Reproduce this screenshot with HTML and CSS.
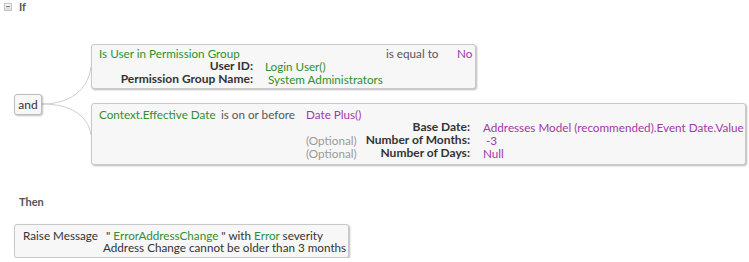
FILE: index.html
```html
<!DOCTYPE html>
<html>
	<head>
		<meta charset="UTF-8">
		<title>Rule</title>
		<link rel="stylesheet" href="styles.css">
	</head>
	<body>
		<div class="rule">
			<div class="sec-head">
				<span class="toggle"></span>
				<span class="head">If</span>
			</div>

			<div class="tree">
				<svg class="links" width="100" height="130" viewBox="0 0 100 130">
					<path d="M42 60 C 70 60, 88 46, 91 23" />
					<path d="M42 60 C 70 60, 88 71, 91 91" />
				</svg>
				<div class="node">and</div>
				<div class="conds">
					<div class="box cond1">
						<div class="c1-top">
							<span class="g">Is User in Permission Group</span>
							<span class="op">is equal to</span>
							<span class="p">No</span>
						</div>
						<div class="c1-params">
							<span class="lbl">User ID:</span>
							<span class="g">Login User()</span>
							<span class="lbl">Permission Group Name:</span>
							<span class="g lead">System Administrators</span>
						</div>
					</div>
					<div class="box cond2">
						<div class="c2-top">
							<span class="g">Context.Effective Date</span>
							<span class="op">is on or before</span>
							<span class="p">Date Plus()</span>
						</div>
						<div class="c2-params">
							<span class="lbl"><span></span>Base Date:</span>
							<span class="p">Addresses Model (recommended).Event Date.Value</span>
							<span class="lbl"><span class="opt">(Optional)</span>Number of Months:</span>
							<span class="p lead">-3</span>
							<span class="lbl"><span class="opt">(Optional)</span>Number of Days:</span>
							<span class="p">Null</span>
						</div>
					</div>
				</div>
			</div>

			<div class="head then">Then</div>

			<div class="box action">
				<span>Raise Message</span>
				<span class="msg1">&nbsp;&quot; <span class="g">ErrorAddressChange</span> &quot; with <span class="g">Error</span> severity</span>
				<span></span>
				<span>Address Change cannot be older than 3 months</span>
			</div>
		</div>
	</body>
</html>
```

FILE: styles.css
```css
* {
	margin: 0;
	padding: 0;
	box-sizing: border-box;
}

body {
	background: #fff;
	font-family: Lato, "Liberation Sans", Arial, sans-serif;
	font-size: 11.7px;
	color: #333;
	white-space: nowrap;
}

.rule {
	padding: 1px 0 0 4px;
}

.sec-head {
	display: flex;
	align-items: center;
	gap: 7px;
	height: 11px;
}

.toggle {
	width: 8px;
	height: 8px;
	border: 1px solid #c4c4c4;
	background: linear-gradient(#fafafa, #dcdcdc);
	position: relative;
}

.toggle::after {
	content: "";
	position: absolute;
	left: 1px;
	top: 2px;
	width: 4px;
	height: 1px;
	background: #777;
}

.head {
	font-weight: bold;
	font-size: 11px;
	color: #555;
}

.g {
	color: #2f8f2f;
}

.p {
	color: #a238a8;
}

.op {
	color: #555;
}

.box {
	background: #f7f7f7;
	border: 1px solid #c9c9c9;
	border-radius: 3px;
	box-shadow: 1px 1px 2px rgba(0, 0, 0, 0.28);
	line-height: 12.8px;
}

.tree {
	position: relative;
	display: flex;
	align-items: center;
	gap: 49px;
	margin: 32px 0 0 10px;
}

.links {
	position: absolute;
	left: -14px;
	top: 0;
	fill: none;
	stroke: #cfcfcf;
	stroke-width: 1;
}

.node {
	position: relative;
	width: 28px;
	height: 21px;
	line-height: 19px;
	font-size: 12px;
	text-align: center;
	background: #f7f7f7;
	border: 1px solid #bdbdbd;
	border-radius: 3px;
	box-shadow: 1px 1px 2px rgba(0, 0, 0, 0.25);
}

.conds {
	position: relative;
	display: flex;
	flex-direction: column;
	gap: 14px;
}

.cond1 {
	width: 385px;
	padding: 2px 0 3px 7px;
}

.c1-top {
	display: grid;
	grid-template-columns: 287px 71px auto;
}

.c1-params {
	display: grid;
	grid-template-columns: 154px auto;
	column-gap: 12px;
}

.lbl {
	font-weight: bold;
	font-size: 12px;
	color: #333;
	text-align: right;
}

.lead {
	padding-left: 3px;
}

.cond2 {
	width: 655px;
	padding: 4px 0 4px 7px;
}

.c2-top {
	display: grid;
	grid-template-columns: 122px 85px auto;
}

.c2-params {
	display: grid;
	grid-template-columns: 164px auto;
	column-gap: 13px;
	margin-left: 207px;
}

.c2-params .lbl {
	display: flex;
	justify-content: space-between;
}

.opt {
	font-weight: normal;
	font-size: 11.7px;
	color: #9a9a9a;
}

.then {
	margin: 30px 0 0 15px;
	height: 13px;
	line-height: 13px;
}

.action {
	width: 335px;
	margin: 16px 0 0 10px;
	padding: 4px 0 4px 8px;
	line-height: 12.2px;
	display: grid;
	grid-template-columns: 80px auto;
	color: #333;
}
```
